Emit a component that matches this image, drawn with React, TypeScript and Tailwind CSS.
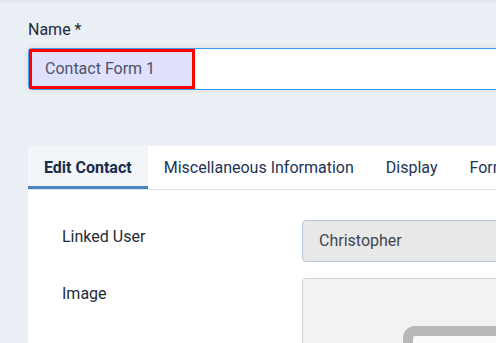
export default function App() {
  const tabs = ['Edit Contact', 'Miscellaneous Information', 'Display', 'Form', 'Publishing'];

  return (
    <div className="relative w-[496px] h-[343px] overflow-hidden bg-[#eaeff5] font-['Roboto',sans-serif]">
      <div className="absolute inset-x-0 top-0 h-[4px] bg-gradient-to-b from-[#dfe6ef] to-transparent" />
      <div className="pt-[18px] pl-[28px]">
        <label className="block text-base leading-6 text-[#1f2a37]">Name *</label>

        {/* title input */}
        <div className="mt-[6px] flex h-[42px] w-[620px] rounded-l-[4px] border border-[#3b9cf1] bg-white shadow-[0_0_0_3px_#e6e8ec]">
          <span className="flex h-full w-[166px] items-center border-[3px] border-[#ff0000] bg-[#dfe0fc] pl-[13px] text-base text-[#4a5366]">
            Contact Form 1
          </span>
        </div>

        {/* tabs */}
        <div className="mt-[56px] w-[720px] bg-white">
          <div className="flex h-[44px] border-b border-[#dbe2ea]">
            {tabs.map((tab, i) => (
              <div
                key={tab}
                className={
                  i === 0
                    ? 'flex shrink-0 items-center whitespace-nowrap border-b-[3px] border-[#4b84c4] bg-[#f2f5f9] px-4 pt-[3px] text-base font-bold text-[#172c49]'
                    : 'flex shrink-0 items-center whitespace-nowrap px-4 text-base text-[#1c3456]'
                }
              >
                {tab}
              </div>
            ))}
          </div>

          <div className="pl-[34px] pt-[30px] pb-6">
            <div className="flex">
              <div className="w-[240px] shrink-0 pt-[5px] text-base leading-6 text-[#1f2a37]">Linked User</div>
              <div className="flex h-[42px] w-[400px] shrink-0 items-center rounded-[4px] border border-[#b7c8de] bg-[#e8e8e8] pl-4 text-base text-[#3f4650]">
                Christopher
              </div>
            </div>

            <div className="mt-4 flex">
              <div className="w-[240px] shrink-0 pt-[4px] text-base leading-6 text-[#1f2a37]">Image</div>
              <div className="h-[200px] w-[400px] shrink-0 rounded-[4px] border border-[#d3d3d3] bg-[#f2f2f2] pl-[100px] pt-[47px]">
                <div className="h-[150px] w-[220px] rounded-[12px] border-[10px] border-[#b8b8b8] bg-[#fafafa]" />
              </div>
            </div>
          </div>
        </div>
      </div>
    </div>
  );
}
